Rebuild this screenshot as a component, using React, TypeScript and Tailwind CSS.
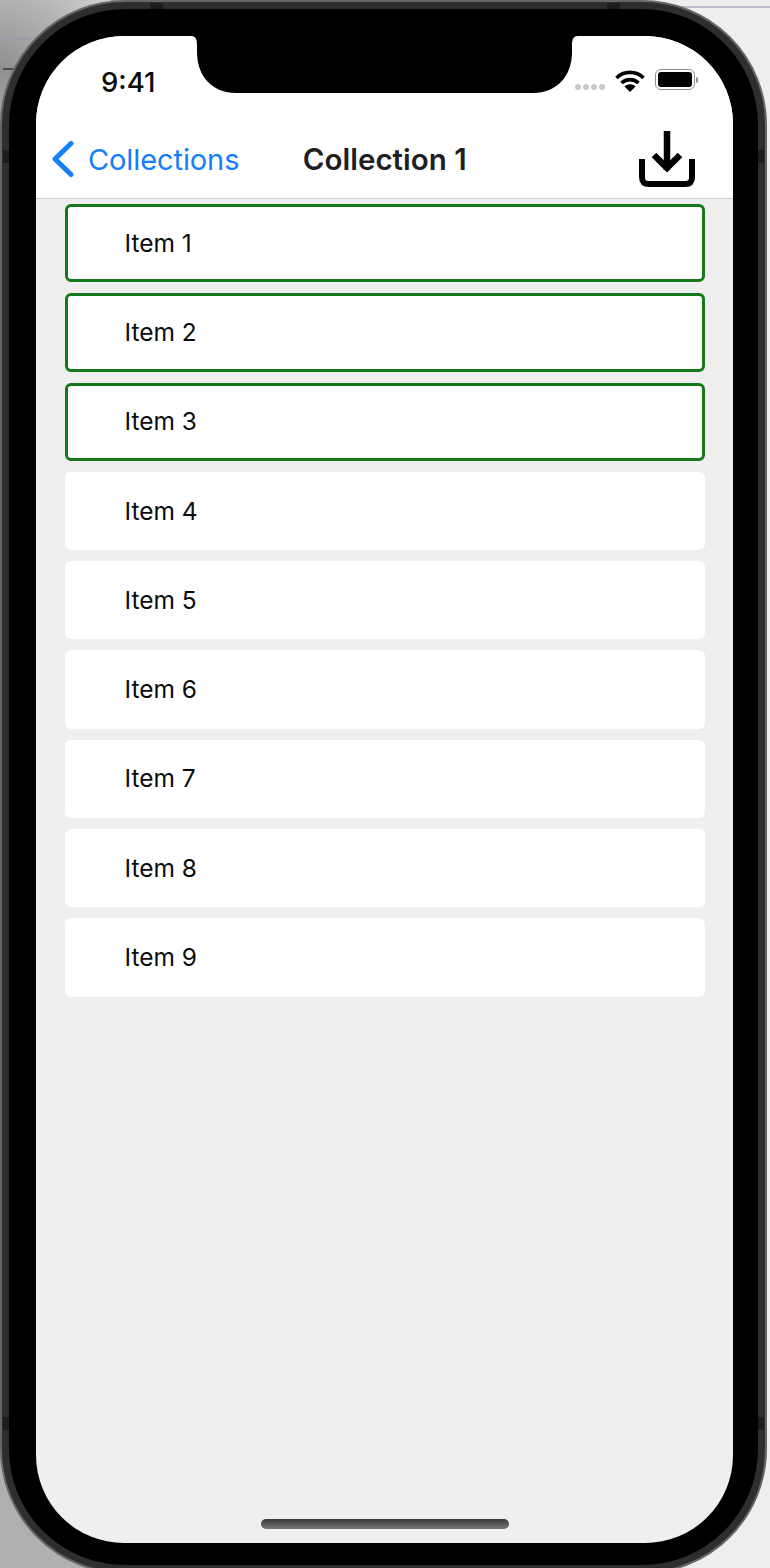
const items = [1, 2, 3, 4, 5, 6, 7, 8, 9];

function Notch() {
  return (
    <svg className="absolute left-[155px] top-0" width="387" height="58" viewBox="0 0 387 58">
      <path d="M0 0H387C381 0 381 6 381 10V16C381 40 366 57 342 57H45C21 57 6 40 6 16V10C6 6 6 0 0 0Z" fill="#000" />
    </svg>
  );
}

function Wifi() {
  return (
    <svg width="30" height="23" viewBox="0 0 30 23">
      <path d="M1.5 9C8.5 1.5 21.5 1.5 28.5 9" fill="none" stroke="#000" strokeWidth="3.6" />
      <path d="M6.5 14C11 9.5 19 9.5 23.5 14" fill="none" stroke="#000" strokeWidth="3.6" />
      <path d="M9.5 17.5C12.5 14.6 17.5 14.6 20.5 17.5L15 23Z" fill="#000" />
    </svg>
  );
}

function Battery() {
  return (
    <div className="flex items-center gap-[1px]">
      <div className="h-[21px] w-[40px] rounded-[6px] border-[1.5px] border-[#8f8f8f] p-[2px]">
        <div className="h-full w-full rounded-[3px] bg-black" />
      </div>
      <div className="h-[6px] w-[2px] rounded-r-full bg-[#8f8f8f]" />
    </div>
  );
}

function RimMark({ className }: { className: string }) {
  return <div className={"absolute bg-[#1c1c1c] " + className} />;
}

export default function App() {
  return (
    <div
      className="relative h-[1568px] w-[770px] overflow-hidden bg-[radial-gradient(circle_at_0px_70px,#8f8f8f,#d0d0d0_130px,transparent_131px),linear-gradient(to_right,#b0b0b0,#b0b0b0_110px,#eeeeee_660px)]"
      style={{ fontFamily: "Inter, 'Liberation Sans', sans-serif" }}
    >
      <div className="absolute left-0 top-[38px] h-[2px] w-[30px] bg-[#9a9aa8]" />
      <div className="absolute left-[3px] top-[68px] h-[2px] w-[12px] bg-[#4a4a55]" />
      <div className="absolute right-0 top-[6px] h-[2px] w-[90px] bg-[#bcbccc]" />
      <div className="relative h-[1574px] w-[767px] rounded-[125px] border-[2px] border-[#666666] bg-[#2e2e2e] p-[7px]">
        <RimMark className="left-[1px] top-[148px] h-[13px] w-[6px]" />
        <RimMark className="left-[1px] top-[1415px] h-[13px] w-[6px]" />
        <RimMark className="right-[1px] top-[148px] h-[13px] w-[6px]" />
        <RimMark className="right-[1px] top-[1415px] h-[13px] w-[6px]" />
        <RimMark className="left-[148px] top-[1px] h-[6px] w-[13px]" />
        <RimMark className="left-[605px] top-[1px] h-[6px] w-[13px]" />
        <div className="h-full w-full rounded-[116px] bg-black pb-[21px] pl-[27px] pr-[25px] pt-[27px]">
          <div className="relative flex h-[1507px] w-[697px] flex-col overflow-hidden rounded-[88px] bg-[#efefef]">
            <div className="h-[163px] shrink-0 border-b border-[#cfcfcf] bg-white">
              <div className="flex h-[86px] items-start justify-between pl-[65px] pr-[35px]">
                <span className="pt-[29px] text-[27.5px] font-medium leading-[34px] text-[#0b0b0b]">9:41</span>
                <div className="flex items-start pt-[33px]">
                  <div className="mr-[10px] mt-[15px] flex gap-[2px]">
                    <div className="h-[6px] w-[6px] rounded-full bg-[#c8c8c8]" />
                    <div className="h-[6px] w-[6px] rounded-full bg-[#c8c8c8]" />
                    <div className="h-[6px] w-[6px] rounded-full bg-[#c8c8c8]" />
                    <div className="h-[6px] w-[6px] rounded-full bg-[#c8c8c8]" />
                  </div>
                  <div className="flex items-start gap-[10px]">
                    <Wifi />
                    <Battery />
                  </div>
                </div>
              </div>
              <div className="relative flex h-[76px] items-center pl-[14px] pr-[37px]">
                <svg width="26" height="36" viewBox="0 0 26 36" className="-mt-[2px]">
                  <path d="M21 2.5L5 18L21 33.5" fill="none" stroke="#147efb" strokeWidth="5" strokeLinecap="round" strokeLinejoin="round" />
                </svg>
                <span className="ml-[12px] text-[29px] leading-[36px] tracking-[-0.1px] text-[#147efb]">Collections</span>
                <span className="-mt-[2px] ml-[63.5px] flex-1 text-[29.5px] font-semibold leading-[36px] text-[#1f1f1f]">Collection 1</span>
                <svg width="58" height="58" viewBox="0 0 58 58" className="-mt-[2px]">
                  <path d="M4 29V47C4 52 6 54 11 54H47C52 54 54 52 54 47V29" fill="none" stroke="#000" strokeWidth="6" />
                  <path d="M29 1V40" fill="none" stroke="#000" strokeWidth="6.5" />
                  <path d="M16 25L29 38L42 25" fill="none" stroke="#000" strokeWidth="6.5" />
                </svg>
              </div>
            </div>
            <div className="flex flex-col gap-[11px] pl-[29px] pr-[28px] pt-[5px]">
              {items.map((n) => (
                <div
                  key={n}
                  className={
                    n <= 3
                      ? "flex h-[78.3px] items-center rounded-[6px] border-[3px] border-[#15791b] bg-white pb-[1px] pl-[56.5px]"
                      : "flex h-[78.3px] items-center rounded-[6px] bg-white pb-[1px] pl-[59.5px]"
                  }
                >
                  <span className="text-[24.5px] leading-[32px] text-[#0c0c0c]">Item {n}</span>
                </div>
              ))}
            </div>
            <Notch />
            <div className="absolute bottom-[14px] left-[225px] h-[10px] w-[248px] rounded-full bg-[linear-gradient(to_bottom,#3a3a3a,#777777)]" />
          </div>
        </div>
      </div>
    </div>
  );
}
